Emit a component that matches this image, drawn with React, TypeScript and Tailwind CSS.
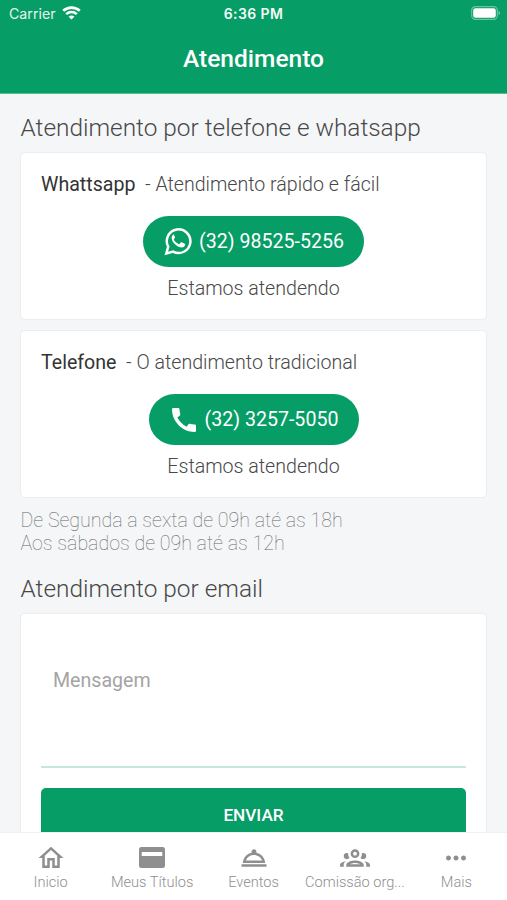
import type { ReactNode } from "react";
import { MdCall, MdMoreHoriz, MdOutlineHome, MdOutlineRoomService } from "react-icons/md";

function WhatsappIcon() {
  return (
    <svg className="h-[29px] w-[28px]" viewBox="0 0 28 29" fill="none">
      <path d="M2.300 26.500 4.200 19.700A11.800 11.800 0 1 1 9.100 24.600z" stroke="white" strokeWidth="2.5" />
      <path d="M9.200 7.700c-.8.600-1.700 1.700-1.500 3.500.5 4.600 5.900 9.300 10.100 9.300 1.700 0 3.100-1.300 3.400-2.700.1-.500 0-.8-.4-1l-3.100-1.500c-.4-.2-.7-.1-1 .3l-1.100 1.400c-.2.300-.5.3-.8.200-2.200-.9-3.900-2.400-4.900-4.400-.2-.3-.1-.6.1-.8l.8-1c.2-.3.3-.5.1-.9l-1.200-2.900c-.1-.1-.3-.1-.5.500z" fill="white" />
    </svg>
  );
}

function GroupIcon() {
  return (
    <svg className="size-[30px]" viewBox="0 0 24 24" fill="currentColor">
      <path d="M12,5A3.5,3.5 0 0,0 8.5,8.5A3.5,3.5 0 0,0 12,12A3.5,3.5 0 0,0 15.5,8.5A3.5,3.5 0 0,0 12,5M12,7A1.5,1.5 0 0,1 13.5,8.5A1.5,1.5 0 0,1 12,10A1.5,1.5 0 0,1 10.5,8.5A1.5,1.5 0 0,1 12,7M5.5,8A2.5,2.5 0 0,0 3,10.5C3,11.44 3.53,12.25 4.29,12.68C4.65,12.88 5.06,13 5.5,13C5.94,13 6.35,12.88 6.71,12.68C7.08,12.47 7.39,12.17 7.62,11.81C6.89,10.86 6.5,9.7 6.5,8.5C6.5,8.41 6.5,8.31 6.5,8.22C6.2,8.08 5.86,8 5.5,8M18.5,8C18.14,8 17.8,8.08 17.5,8.22C17.5,8.31 17.5,8.41 17.5,8.5C17.5,9.7 17.11,10.86 16.38,11.81C16.5,12 16.63,12.15 16.78,12.3C16.94,12.45 17.1,12.58 17.29,12.68C17.65,12.88 18.06,13 18.5,13C18.94,13 19.35,12.88 19.71,12.68C20.47,12.25 21,11.44 21,10.5A2.5,2.5 0 0,0 18.5,8M12,14C9.66,14 5,15.17 5,17.5V19H19V17.5C19,15.17 14.34,14 12,14M4.71,14.55C2.78,14.78 0,15.76 0,17.5V19H3V17.07C3,16.06 3.69,15.22 4.71,14.55M19.29,14.55C20.31,15.22 21,16.06 21,17.07V19H24V17.5C24,15.76 21.22,14.78 19.29,14.55M12,16C13.53,16 15.24,16.5 16.23,17H7.77C8.76,16.5 10.47,16 12,16Z" />
    </svg>
  );
}

function StatusBar() {
  return (
    <div className="grid h-[28px] grid-cols-3 items-center px-[9px] font-['Inter',sans-serif] leading-none">
      <div className="flex items-center gap-[6px]">
        <span className="text-[14.2px] opacity-90">Carrier</span>
        <svg className="mb-[2px] h-[14px] w-[19px]" viewBox="0 0 19 14" fill="none">
          <path d="M1.2 4.8C5.8 .5 13.2 .5 17.8 4.8" stroke="white" strokeWidth="2.6" />
          <path d="M4.2 8.1c3-2.8 7.6-2.8 10.6 0" stroke="white" strokeWidth="2.5" />
          <path d="M9.5 13.6 6.6 10.7c1.6-1.5 4.2-1.5 5.8 0z" fill="white" />
        </svg>
      </div>
      <span className="text-center text-[14px] font-semibold tracking-[0.4px] opacity-95">6:36 PM</span>
      <svg className="-mr-[2.500px] mb-[2px] h-[14px] w-[30px] justify-self-end" viewBox="0 0 30 14" fill="none">
        <rect x=".7" y=".7" width="25.6" height="12.6" rx="3.6" stroke="white" strokeOpacity=".4" strokeWidth="1.2" />
        <rect x="2.2" y="2.2" width="22.6" height="9.6" rx="2.2" fill="white" />
        <path d="M27.6 4.8c1.8.9 1.8 3.5 0 4.4z" fill="white" fillOpacity=".5" />
      </svg>
    </div>
  );
}

interface ContactProps {
  name: string;
  text: string;
  phone: string;
  icon: ReactNode;
  buttonClass: string;
}

function ContactCard({ name, text, phone, icon, buttonClass }: ContactProps) {
  return (
    <section className="flex h-[168px] flex-col rounded-[5px] border border-[#ebedee] bg-white px-[20px] pt-[20px]">
      <p className="whitespace-pre text-[19.6px] leading-[23px] font-light">
        <span className="font-normal text-[#333]">{name}</span>{"  - "}{text}
      </p>
      <button className={`mt-[20px] flex h-[51px] shrink-0 items-center self-center rounded-full bg-[#079d66] text-[19.6px] text-white ${buttonClass}`}>
        {icon}
        <span className="whitespace-nowrap">{phone}</span>
      </button>
      <p className="mt-[10px] text-center text-[19.6px] leading-[23px] font-light">Estamos atendendo</p>
    </section>
  );
}

function Tab({ icon, label }: { icon: ReactNode; label: string }) {
  return (
    <div className="flex min-w-0 flex-1 flex-col items-center pt-[9px]">
      <div className="flex h-[31px] items-center text-[#8f8f8f]">{icon}</div>
      <span className="mt-[1px] whitespace-nowrap text-[14.6px] leading-[17px] font-light text-[#8f8f8f]">{label}</span>
    </div>
  );
}

export default function App() {
  return (
    <div className="flex h-[900px] w-[507px] flex-col overflow-hidden bg-[#f5f6f8] font-['Roboto',sans-serif] text-[#484848]">
      <header className="h-[94px] shrink-0 border-b border-[#56bc94] bg-[#079d66] text-white">
        <StatusBar />
        <h1 className="mt-[16px] text-center text-[24.5px] leading-[29px] font-medium">Atendimento</h1>
      </header>
      <main className="min-h-0 flex-1 overflow-hidden px-[20px]">
        <h2 className="mt-[19px] pl-[.5px] text-[24.4px] leading-[29px] font-light">Atendimento por telefone e whatsapp</h2>
        <div className="mt-[10px] flex flex-col gap-[10px]">
          <ContactCard name="Whattsapp" text="Atendimento rápido e fácil" phone="(32) 98525-5256" icon={<WhatsappIcon />} buttonClass="w-[221px] gap-[7px] pl-[21px]" />
          <ContactCard name="Telefone" text="O atendimento tradicional" phone="(32) 3257-5050" icon={<MdCall size={32} />} buttonClass="w-[210px] gap-[5px] pl-[19px]" />
        </div>
        <p className="mt-[11px] pl-[.5px] text-[19.6px] leading-[23px] font-thin text-[#666]">De Segunda a sexta de 09h até as 18h<br />Aos sábados de 09h até as 12h</p>
        <h2 className="mt-[19px] pl-[.5px] text-[24.4px] leading-[29px] font-light">Atendimento por email</h2>
        <section className="mt-[10px] rounded-[5px] border border-[#ebedee] bg-white px-[20px] pt-[20px]">
          <div className="h-[134px] border-b-2 border-[#c5e7dc] px-[12px] pt-[35px] text-[19.6px] leading-[23px] text-[#a4a4a4]">Mensagem</div>
          <button className="mt-[20px] block h-[55px] w-full rounded-[5px] bg-[#079d66] text-[17.2px] font-medium text-white">ENVIAR</button>
        </section>
      </main>
      <nav className="flex h-[68px] shrink-0 border-t border-[#eeefef] bg-white">
        <Tab label="Inicio" icon={<MdOutlineHome size={30} />} />
        <Tab label="Meus Títulos" icon={
          <svg className="h-[21px] w-[26px]" viewBox="0 0 26 21" fill="currentColor" fillRule="evenodd">
            <path d="M2.5 0h21A2.5 2.5 0 0 1 26 2.5v16a2.5 2.5 0 0 1-2.5 2.5h-21A2.5 2.5 0 0 1 0 18.500v-16A2.500 2.500 0 0 1 2.500 0zM2.700 5v4h20.600V5z" />
          </svg>
        } />
        <Tab label="Eventos" icon={<MdOutlineRoomService size={30} />} />
        <Tab label="Comissão org..." icon={<GroupIcon />} />
        <Tab label="Mais" icon={<MdMoreHoriz size={30} />} />
      </nav>
    </div>
  );
}
